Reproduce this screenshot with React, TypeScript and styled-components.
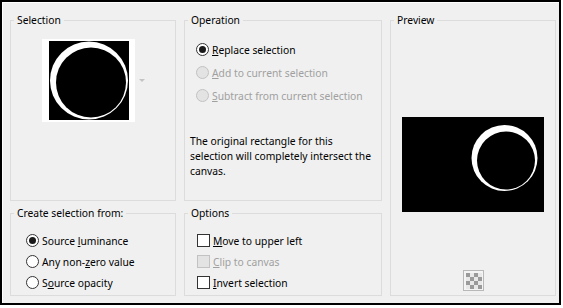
import styled, { createGlobalStyle } from 'styled-components'

const GlobalStyle = createGlobalStyle`
  html, body {
    margin: 0;
    padding: 0;
    background: #fff;
  }
  body {
    font-family: "Noto Sans", "Liberation Sans", sans-serif;
    font-size: 10.3px;
    color: #000;
  }
`

const Frame = styled.div`
  box-sizing: border-box;
  width: 561px;
  height: 305px;
  border: 2px solid #000;
  box-shadow: inset 1px 1px 0 #fff;
  background: #f0f0f0;
  display: grid;
  grid-template-columns: 166px 198px 166px;
  grid-template-rows: 189px 91px;
  column-gap: 8px;
  row-gap: 4px;
  padding: 10px 0 0 8px;
`

const Group = styled.fieldset<{ $span?: boolean }>`
  margin: 0;
  padding: 0;
  min-width: 0;
  border: 1px solid #dcdcdc;
  display: flex;
  flex-direction: column;
  grid-row: ${p => (p.$span ? '1 / span 2' : 'auto')};
  grid-column: ${p => (p.$span ? '3' : 'auto')};
`

const Legend = styled.legend`
  margin-left: 3px;
  padding: 0 3px;
  line-height: 16px;
`

const SelectionBody = styled.div`
  display: flex;
  align-items: center;
  gap: 4px;
  padding: 11px 0 0 31px;
`

const DropArrow = styled.span`
  width: 0;
  height: 0;
  border-left: 3px solid transparent;
  border-right: 3px solid transparent;
  border-top: 3px solid #c4c4c4;
`

const OptionList = styled.div<{ $pad: string }>`
  display: flex;
  flex-direction: column;
  padding: ${p => p.$pad};
`

const Row = styled.label<{ $h: number; $disabled?: boolean }>`
  display: flex;
  align-items: center;
  gap: 3px;
  height: ${p => p.$h}px;
  color: ${p => (p.$disabled ? '#a0a0a0' : '#000')};
`

const RadioCircle = styled.span<{ $checked?: boolean; $disabled?: boolean }>`
  box-sizing: border-box;
  flex: none;
  width: 13px;
  height: 13px;
  border-radius: 50%;
  border: 1px solid ${p => (p.$disabled ? '#c2c2c2' : '#333')};
  background: ${p => (p.$disabled ? '#e3e3e3' : '#fff')};
  display: flex;
  align-items: center;
  justify-content: center;
  &::after {
    content: '';
    display: ${p => (p.$checked ? 'block' : 'none')};
    width: 7px;
    height: 7px;
    border-radius: 50%;
    background: #1a1a1a;
  }
`

const CheckBox = styled.span<{ $disabled?: boolean }>`
  box-sizing: border-box;
  flex: none;
  width: 13px;
  height: 13px;
  border: 1px solid ${p => (p.$disabled ? '#c2c2c2' : '#333')};
  background: ${p => (p.$disabled ? '#e3e3e3' : '#fff')};
`

const Note = styled.p`
  margin: 27px 0 0 5px;
  line-height: 15px;
`

const PreviewBody = styled.div`
  flex: 1;
  display: flex;
  flex-direction: column;
  align-items: center;
  justify-content: space-between;
  padding: 89px 0 4px;
`

type Opt = { label: React.ReactNode; checked?: boolean; disabled?: boolean }

const Radios = ({ items, h, pad }: { items: Opt[]; h: number; pad: string }) => (
  <OptionList $pad={pad}>
    {items.map((it, i) => (
      <Row key={i} $h={h} $disabled={it.disabled}>
        <RadioCircle $checked={it.checked} $disabled={it.disabled} />
        <span>{it.label}</span>
      </Row>
    ))}
  </OptionList>
)

const Checks = ({ items, h, pad }: { items: Opt[]; h: number; pad: string }) => (
  <OptionList $pad={pad}>
    {items.map((it, i) => (
      <Row key={i} $h={h} $disabled={it.disabled}>
        <CheckBox $disabled={it.disabled} />
        <span>{it.label}</span>
      </Row>
    ))}
  </OptionList>
)

const Thumb = () => (
  <svg width="93" height="83" viewBox="0 0 93 83">
    <rect width="93" height="83" fill="#fff" />
    <rect x="7" y="2" width="80" height="79" fill="#000" />
    <circle cx="47" cy="41.5" r="39" fill="#fff" />
    <circle cx="49" cy="43.5" r="35" fill="#000" />
  </svg>
)

const PreviewPic = () => (
  <svg width="142" height="95" viewBox="0 0 142 95">
    <rect width="142" height="95" fill="#000" />
    <circle cx="102.5" cy="41" r="33" fill="#fff" />
    <circle cx="104" cy="43.5" r="29" fill="#000" />
  </svg>
)

const CheckerIcon = () => {
  const cells = []
  for (let r = 0; r < 4; r++) {
    for (let c = 0; c < 4; c++) {
      if ((r + c) % 2 === 0) cells.push(<rect key={`${r}-${c}`} x={3 + c * 4} y={3 + r * 4} width="4" height="4" fill="#9a9a9a" />)
    }
  }
  return (
    <svg width="21" height="21" viewBox="0 0 21 21">
      <rect x="0.5" y="0.5" width="20" height="20" fill="#f4f4f4" stroke="#b8b8b8" />
      <rect x="3" y="3" width="16" height="16" fill="#e8e8e8" />
      {cells}
    </svg>
  )
}

export default function App() {
  return (
    <>
      <GlobalStyle />
      <Frame>
        <Group>
          <Legend>Selection</Legend>
          <SelectionBody>
            <Thumb />
            <DropArrow />
          </SelectionBody>
        </Group>

        <Group>
          <Legend>Operation</Legend>
          <Radios
            h={23}
            pad="10px 0 0 11px"
            items={[
              { label: <><u>R</u>eplace selection</>, checked: true },
              { label: <><u>A</u>dd to current selection</>, disabled: true },
              { label: <><u>S</u>ubtract from current selection</>, disabled: true },
            ]}
          />
          <Note>
            The original rectangle for this
            <br />
            selection will completely intersect the
            <br />
            canvas.
          </Note>
        </Group>

        <Group $span>
          <Legend>Preview</Legend>
          <PreviewBody>
            <PreviewPic />
            <CheckerIcon />
          </PreviewBody>
        </Group>

        <Group>
          <Legend>Create selection from:</Legend>
          <Radios
            h={21}
            pad="9px 0 0 15px"
            items={[
              { label: <>Source <u>l</u>uminance</>, checked: true },
              { label: <>Any non-<u>z</u>ero value</> },
              { label: <>S<u>o</u>urce opacity</> },
            ]}
          />
        </Group>

        <Group>
          <Legend>Options</Legend>
          <Checks
            h={21}
            pad="9px 0 0 12px"
            items={[
              { label: <><u>M</u>ove to upper left</> },
              { label: <><u>C</u>lip to canvas</>, disabled: true },
              { label: <><u>I</u>nvert selection</> },
            ]}
          />
        </Group>
      </Frame>
    </>
  )
}
